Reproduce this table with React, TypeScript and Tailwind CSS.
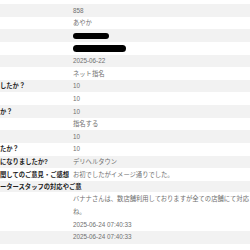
import React from 'react'

interface Row {
  label?: string
  value?: React.ReactNode
  shade: boolean
  wide?: boolean
  tall?: boolean
}

const rows: Row[] = [
  { value: '858', shade: true },
  { value: 'あやか', shade: false },
  { value: <span className="block h-[6px] w-[36px] rounded-full bg-black blur-[0.4px]" />, shade: true },
  { value: <span className="block h-[7px] w-[53px] rounded-full bg-black blur-[0.4px]" />, shade: false },
  { value: '2025-06-22', shade: true },
  { value: 'ネット指名', shade: false },
  { label: 'したか？', value: '10', shade: true },
  { value: '10', shade: false },
  { label: 'か？', value: '10', shade: true },
  { value: '指名する', shade: false },
  { value: '10', shade: true },
  { label: 'たか？', value: '10', shade: false },
  { label: 'になりましたか?', value: 'デリヘルタウン', shade: true },
  { label: '関してのご意見・ご感想', value: 'お初でしたがイメージ通りでした。', shade: false },
  { label: 'ータースタッフの対応やご意', shade: true, wide: true },
  {
    value: (
      <>
        バナナさんは、数店舗利用しておりますが全ての店舗にて対応
        <br />
        ね。
      </>
    ),
    shade: false,
    tall: true,
  },
  { value: '2025-06-24 07:40:33', shade: false },
  { value: '2025-06-24 07:40:33', shade: true },
  { value: '', shade: false },
]

export default function App(): React.JSX.Element {
  return (
    <div className="h-[250px] w-[250px] overflow-hidden bg-white pt-[4px] font-['Liberation_Sans','Noto_Sans_CJK_JP',sans-serif] text-[6.3px]">
      <div className="w-[250px]">
        {rows.map((row, i) => (
          <div
            key={i}
            className={`flex items-center whitespace-nowrap ${row.shade ? 'bg-[#f2f2f2]' : 'bg-white'} ${
              row.wide ? 'h-[11.5px]' : row.tall ? 'h-[26px] leading-[13px]' : 'h-[12.64px]'
            }`}
          >
            {row.wide ? (
              <span className="font-bold text-[#222]">{row.label}</span>
            ) : (
              <>
                <span className="w-[72px] shrink-0 font-bold text-[#222]">{row.label}</span>
                <span className="pl-[1px] text-[#6f6f6f]">{row.value}</span>
              </>
            )}
          </div>
        ))}
      </div>
    </div>
  )
}
